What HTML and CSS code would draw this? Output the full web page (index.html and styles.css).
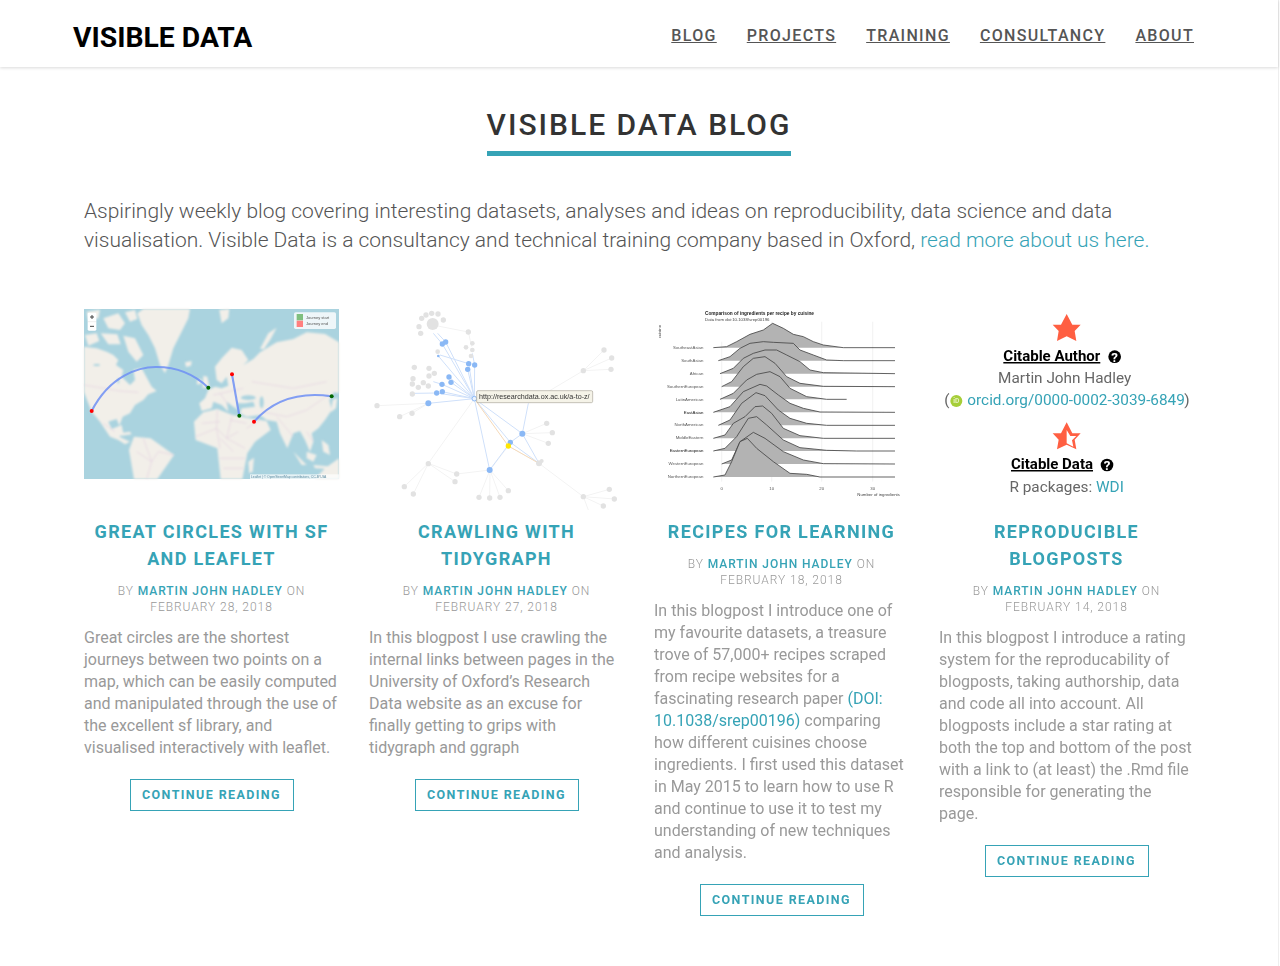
FILE: index.html
```html
<!DOCTYPE html>
<html>
<head>
    <meta charset="UTF-8">
    <meta name="viewport" content="width=device-width, initial-scale=1.0">
    <title>Visible Data Blog</title>
    <link rel="stylesheet" href="styles.css">
</head>
<body>
<div class="page">
    <header class="site-header">
        <a class="logo" href="#">VISIBLE DATA</a>
        <nav class="site-nav">
            <a href="#">Blog</a>
            <a href="#">Projects</a>
            <a href="#">Training</a>
            <a href="#">Consultancy</a>
            <a href="#">About</a>
        </nav>
    </header>

    <main class="container">
        <div class="page-title"><h1>Visible Data Blog</h1></div>
        <p class="intro">Aspiringly weekly blog covering interesting datasets, analyses and ideas on reproducibility, data science and data visualisation. Visible Data is a consultancy and technical training company based in Oxford, <a href="#">read more about us here.</a></p>

        <div class="posts">
            <article class="post">
                <div class="thumb">
                    <svg class="thumb-map" viewBox="12 12 765 510">
                        <rect x="12" y="12" width="765" height="510" fill="#aad3df"/>
                        <g class="blur-a" fill="#f2efe9">
                            <path d="M12 125L50 130 80 140 100 150 115 165 108 180 130 195 125 215 150 240 165 225 160 195 185 190 215 245 230 258 205 268 190 285 165 300 150 325 128 335 118 362 110 342 85 350 95 372 125 360 130 385 118 395 150 410 135 418 115 405 90 395 60 350 35 320 12 262Z"/>
                            <path d="M172 25L190 12 330 12 325 40 300 90 280 130 265 180 255 205 240 180 225 130 205 90 185 60Z"/>
                            <path d="M15 90L50 85 58 108 25 122ZM70 40L115 25 135 55 120 75 85 70ZM130 92L165 100 190 150 170 170 145 140ZM62 85L112 88 122 118 85 118ZM135 22L165 15 172 42 150 50ZM20 20L60 14 55 40 25 45Z"/>
                            <path d="M315 172L335 168 333 182 318 186ZM370 212L382 215 388 245 368 250ZM352 225L364 222 362 238 350 238ZM418 15L448 12 445 40 425 55ZM540 132L565 85 590 68 572 102 552 132ZM118 385L150 380 155 388 125 392Z"/>
                            <path d="M358 295L375 280 385 255 405 245 425 250 445 242 440 215 425 235 410 225 405 185 425 160 455 128 485 135 505 165 490 180 520 162 540 142 590 112 640 102 680 82 735 87 777 112 777 265 762 262 748 285 755 315 735 345 715 370 695 385 700 410 690 440 675 405 660 378 640 385 622 430 600 385 590 350 560 345 540 330 500 335 480 325 485 310 525 305 520 290 495 295 470 295 475 315 460 305 440 290 445 320 425 300 400 290 395 310 365 318Z"/>
                            <path d="M480 335L560 348 572 375 525 410 505 395Z"/>
                            <path d="M342 350L370 322 412 312 457 330 490 335 502 345 532 400 502 445 487 522 422 522 412 430 347 405Z"/>
                            <path d="M162 395L212 400 282 450 232 522 162 522 147 435Z"/>
                            <path d="M505 470L522 458 518 500 508 505ZM705 522L735 490 777 460 777 522ZM680 440L710 450 700 470 680 460ZM725 405L745 420 750 450 730 440ZM758 285L772 278 768 310 752 322ZM640 440L680 480 665 480ZM700 480L760 485 755 492 705 490Z"/>
                        </g>
                        <g class="blur-a" fill="#aad3df">
                            <ellipse cx="505" cy="278" rx="22" ry="7"/>
                            <ellipse cx="545" cy="292" rx="6" ry="18"/>
                            <ellipse cx="115" cy="228" rx="3" ry="8"/>
                            <ellipse cx="50" cy="180" rx="10" ry="3"/>
                        </g>
                        <g class="blur-a map-borders">
                            <path d="M12 240L120 258 175 262M70 355L105 380M190 400L215 470 235 440 282 450M170 440L215 470 200 522M347 395L410 370 440 400 475 380M412 315L410 370 420 430M457 330L440 400 495 430M420 460L495 460M500 370L540 345M545 320L620 335 680 315 745 270M515 230L640 250 740 230M420 265L445 300M400 270L490 250M590 335L640 395M680 380L700 410M365 355L420 350M450 345L500 355M420 400L460 440M430 490L490 490"/>
                        </g>
                        <g class="blur-b map-arcs">
                            <path d="M35 318C90 210 180 185 230 186 290 186 345 210 385 248"/>
                            <path d="M456 208L478 332"/>
                            <path d="M522 350C580 285 660 260 755 274"/>
                        </g>
                        <g class="blur-b">
                            <circle cx="35" cy="318" r="6" fill="#f00"/>
                            <circle cx="456" cy="208" r="6" fill="#f00"/>
                            <circle cx="522" cy="350" r="6" fill="#f00"/>
                            <circle cx="385" cy="248" r="6" fill="#060"/>
                            <circle cx="478" cy="332" r="6" fill="#060"/>
                            <circle cx="755" cy="274" r="6" fill="#060"/>
                            <rect x="23" y="23" width="26" height="54" rx="4" fill="#fff"/>
                            <line x1="23" y1="50" x2="49" y2="50" stroke="#ccc"/>
                            <path d="M30 36h12M36 30v12M30 64h12" stroke="#444" stroke-width="3"/>
                            <rect x="642" y="22" width="126" height="50" rx="5" fill="#fff" fill-opacity=".8"/>
                            <rect x="650" y="27" width="19" height="19" fill="#7fbf7f"/>
                            <rect x="650" y="47" width="19" height="19" fill="#ff7f7f"/>
                            <text class="map-text" x="678" y="41">Journey start</text>
                            <text class="map-text" x="678" y="61">Journey end</text>
                            <rect x="510" y="508" width="267" height="14" fill="#fff" fill-opacity=".7"/>
                            <text class="map-attr" x="513" y="519">Leaflet | © OpenStreetMap contributors, CC-BY-SA</text>
                        </g>
                    </svg>
                </div>
                <h2><a href="#">Great Circles with SF and Leaflet</a></h2>
                <p class="meta">By <a href="#">Martin John Hadley</a> on February 28, 2018</p>
                <p class="excerpt">Great circles are the shortest journeys between two points on a map, which can be easily computed and manipulated through the use of the excellent sf library, and visualised interactively with leaflet.</p>
                <a class="btn" href="#">Continue Reading</a>
            </article>

            <article class="post">
                <div class="thumb">
                    <svg class="thumb-graph" viewBox="12 27 765 600">
                        <g class="blur-b graph-faint">
                            <path d="M328 296L190 490 118 560M190 490L145 582M190 490L275 522M190 490L270 545M375 510L342 592M375 510L374 594M375 510L405 592M375 510L430 572M375 510L275 522M522 490L655 590 733 568M655 590L748 597M655 590L715 618M655 590L670 630M472 401L545 370M472 401L562 398M472 401L550 430M490 310L655 212 717 150M655 212L740 174M655 212L738 208M190 310L36 317M190 310L104 350M190 310L141 340M203 75L310 96M320 140L310 96M430 438L522 490M430 438L375 510"/>
                        </g>
                        <g class="blur-b graph-links">
                            <path d="M328 296L232 132M328 296L242 126M328 296L220 168M328 296L311 191M328 296L308 208M328 296L329 195M328 296L252 231M328 296L258 247M328 296L231 253M328 296L232 275M328 296L215 279M328 296L190 310M328 296L472 401M328 296L436 427M328 296L374 510M374 510L436 427M436 427L522 490M472 401L522 490M472 401L436 427M490 310L472 401M232 132L205 100M242 126L218 100M311 191L225 165M329 195L322 160M231 253L205 245M215 279L150 280"/>
                            <path class="graph-orange" d="M328 296L430 438 522 490"/>
                        </g>
                        <g class="blur-b" fill="#e2e2e2">
                            <circle cx="203" cy="72" r="18"/>
                            <circle cx="183" cy="45" r="8"/><circle cx="200" cy="40" r="8"/><circle cx="219" cy="42" r="8"/><circle cx="170" cy="55" r="8"/><circle cx="162" cy="80" r="8"/><circle cx="235" cy="60" r="8"/><circle cx="167" cy="100" r="8"/><circle cx="310" cy="96" r="8"/>
                            <circle cx="303" cy="142" r="7"/><circle cx="322" cy="130" r="7"/><circle cx="322" cy="150" r="7"/><circle cx="318" cy="168" r="7"/><circle cx="218" cy="155" r="7"/>
                            <circle cx="148" cy="202" r="8"/><circle cx="192" cy="205" r="8"/><circle cx="208" cy="220" r="8"/><circle cx="192" cy="228" r="8"/><circle cx="144" cy="236" r="8"/><circle cx="175" cy="248" r="8"/><circle cx="142" cy="252" r="8"/><circle cx="160" cy="262" r="8"/><circle cx="190" cy="258" r="8"/><circle cx="142" cy="282" r="8"/>
                            <circle cx="36" cy="317" r="8"/><circle cx="104" cy="350" r="8"/><circle cx="141" cy="340" r="8"/>
                            <circle cx="190" cy="491" r="8"/><circle cx="118" cy="560" r="8"/><circle cx="145" cy="582" r="8"/><circle cx="275" cy="522" r="8"/><circle cx="270" cy="545" r="8"/>
                            <circle cx="342" cy="592" r="8"/><circle cx="374" cy="594" r="8"/><circle cx="405" cy="592" r="8"/><circle cx="430" cy="572" r="8"/>
                            <circle cx="522" cy="490" r="9"/><circle cx="530" cy="483" r="6"/>
                            <circle cx="545" cy="370" r="8"/><circle cx="562" cy="398" r="8"/><circle cx="550" cy="430" r="8"/>
                            <circle cx="655" cy="212" r="8"/><circle cx="717" cy="150" r="8"/><circle cx="740" cy="174" r="8"/><circle cx="738" cy="208" r="8"/>
                            <circle cx="655" cy="590" r="8"/><circle cx="733" cy="568" r="8"/><circle cx="748" cy="597" r="8"/><circle cx="715" cy="618" r="8"/>
                        </g>
                        <g class="blur-b" fill="#8ab8f5">
                            <circle cx="232" cy="132" r="8"/><circle cx="242" cy="126" r="8"/><circle cx="220" cy="168" r="4"/>
                            <circle cx="311" cy="191" r="8"/><circle cx="308" cy="208" r="8"/><circle cx="329" cy="195" r="8"/>
                            <circle cx="252" cy="231" r="8"/><circle cx="258" cy="247" r="8"/><circle cx="231" cy="253" r="8"/><circle cx="232" cy="275" r="8"/><circle cx="215" cy="279" r="8"/><circle cx="190" cy="310" r="9"/>
                            <circle cx="472" cy="401" r="9"/><circle cx="436" cy="427" r="8"/><circle cx="374" cy="510" r="9"/>
                            <circle cx="328" cy="296" r="7" fill="#eaf3ff" stroke="#8ab8f5" stroke-width="3"/>
                            <circle cx="430" cy="438" r="8" fill="#ffe600"/>
                        </g>
                        <g class="blur-c">
                            <rect x="335" y="272" width="348" height="36" rx="4" fill="#f5f3e8" stroke="#aaa69a" stroke-width="2"/>
                            <text class="graph-tip" x="342" y="297">http://researchdata.ox.ac.uk/a-to-z/</text>
                        </g>
                    </svg>
                </div>
                <h2><a href="#">Crawling with tidygraph</a></h2>
                <p class="meta">By <a href="#">Martin John Hadley</a> on February 27, 2018</p>
                <p class="excerpt">In this blogpost I use crawling the internal links between pages in the University of Oxford’s Research Data website as an excuse for finally getting to grips with tidygraph and ggraph</p>
                <a class="btn" href="#">Continue Reading</a>
            </article>

            <article class="post">
                <div class="thumb">
                    <svg class="thumb-ridges" viewBox="12 12 765 600">
                        <g class="blur-c">
                            <path class="grid" d="M215 110V530M365 50V530M515 50V530M668 50V530"/>
                            <path class="ridge" d="M190 128L230 125 260 110 300 88 340 75 368 55 400 70 430 88 460 95 490 110 520 120 580 128 735 128"/>
                            <path class="ridge" d="M205 167L240 155 270 130 300 115 340 110 370 112 430 115 450 135 490 150 530 165 580 167 735 167"/>
                            <path class="ridge" d="M210 206L250 190 280 160 310 145 345 135 380 135 410 150 450 170 480 195 520 203 735 206"/>
                            <path class="ridge" d="M215 245L245 230 280 185 310 160 345 155 375 175 410 215 450 235 520 244 735 245"/>
                            <path class="ridge" d="M210 283L250 265 290 225 320 208 360 200 390 215 420 250 470 275 530 283 590 283"/>
                            <path class="ridge" d="M190 322L240 305 280 260 330 238 350 243 385 270 420 295 460 310 510 321 735 322"/>
                            <path class="ridge" d="M205 361L240 345 275 295 318 263 345 272 385 315 420 340 470 355 530 361 735 361"/>
                            <path class="ridge" d="M190 400L225 390 250 355 285 335 315 305 338 303 365 325 400 370 450 392 520 400 735 400"/>
                            <path class="ridge" d="M190 438L225 430 260 395 295 340 320 335 350 360 400 405 450 428 530 436 620 438 735 438"/>
                            <path class="ridge" d="M215 477L245 465 270 410 310 382 345 400 400 440 460 465 520 476 735 477"/>
                            <path class="ridge" d="M190 516L225 510 245 470 270 410 292 400 320 430 370 470 420 505 470 508 510 516 735 516"/>
                            <text class="ridge-title" x="165" y="31">Comparison of ingredients per recipe by cuisine</text>
                            <text class="ridge-sub" x="165" y="48">Data from doi:10.1038/srep00196</text>
                            <text class="ridge-sub" transform="translate(32 100) rotate(-90)">cuisine</text>
                            <g class="ridge-labels">
                                <text x="160" y="132">SoutheastAsian</text>
                                <text x="160" y="171">SouthAsian</text>
                                <text x="160" y="210">African</text>
                                <text x="160" y="248">SouthernEuropean</text>
                                <text x="160" y="287">LatinAmerican</text>
                                <text x="160" y="326" class="ridge-dark">EastAsian</text>
                                <text x="160" y="364">NorthAmerican</text>
                                <text x="160" y="403">MiddleEastern</text>
                                <text x="160" y="441" class="ridge-dark">EasternEuropean</text>
                                <text x="160" y="480">WesternEuropean</text>
                                <text x="160" y="519">NorthernEuropean</text>
                            </g>
                            <g class="ridge-ticks">
                                <text x="215" y="555">0</text>
                                <text x="365" y="555">10</text>
                                <text x="515" y="555">20</text>
                                <text x="668" y="555">30</text>
                            </g>
                            <text class="ridge-sub" x="622" y="574">Number of ingredients</text>
                        </g>
                    </svg>
                </div>
                <h2><a href="#">Recipes for Learning</a></h2>
                <p class="meta">By <a href="#">Martin John Hadley</a> on February 18, 2018</p>
                <p class="excerpt">In this blogpost I introduce one of my favourite datasets, a treasure trove of 57,000+ recipes scraped from recipe websites for a fascinating research paper <a href="#">(DOI: 10.1038/srep00196)</a> comparing how different cuisines choose ingredients. I first used this dataset in May 2015 to learn how to use R and continue to use it to test my understanding of new techniques and analysis.</p>
                <a class="btn" href="#">Continue Reading</a>
            </article>

            <article class="post">
                <div class="thumb">
                    <svg class="thumb-rating" viewBox="12 12 765 600">
                        <g class="blur-c">
                            <path class="star" d="M395 27L412 59 437 59 419 78 424 108 395 94 366 108 371 78 353 59 378 59Z"/>
                            <text class="rate-head" x="205" y="168">Citable Author</text>
                            <circle cx="539" cy="155" r="19"/>
                            <text class="rate-q" x="539" y="170">?</text>
                            <text class="rate-line rate-mid" x="389" y="235">Martin John Hadley</text>
                            <text class="rate-line" x="28" y="300">(</text>
                            <circle cx="64" cy="288" r="18" fill="#a6ce39"/>
                            <text class="rate-id" x="64" y="295">iD</text>
                            <text class="rate-line rate-link" x="97" y="300">orcid.org/0000-0002-3039-6849</text>
                            <text class="rate-line" x="748" y="300">)</text>
                            <path class="star" d="M395 352L412 385 437 385 419 404 424 433 395 419 366 433 371 404 353 385 378 385Z"/>
                            <path class="star-half" d="M395 375L406 393 424 393 411 406 415 425 395 415Z"/>
                            <text class="rate-head" x="228" y="492">Citable Data</text>
                            <circle cx="516" cy="480" r="19"/>
                            <text class="rate-q" x="516" y="495">?</text>
                            <text class="rate-line rate-mid" x="395" y="560">R packages: <tspan class="rate-link">WDI</tspan></text>
                        </g>
                    </svg>
                </div>
                <h2><a href="#">Reproducible Blogposts</a></h2>
                <p class="meta">By <a href="#">Martin John Hadley</a> on February 14, 2018</p>
                <p class="excerpt">In this blogpost I introduce a rating system for the reproducability of blogposts, taking authorship, data and code all into account. All blogposts include a star rating at both the top and bottom of the post with a link to (at least) the .Rmd file responsible for generating the page.</p>
                <a class="btn" href="#">Continue Reading</a>
            </article>
        </div>
    </main>
</div>

<svg class="defs" width="0" height="0">
    <filter id="soft-a"><feGaussianBlur stdDeviation="2.4"/></filter>
    <filter id="soft-b"><feGaussianBlur stdDeviation="1.8"/></filter>
    <filter id="soft-c"><feGaussianBlur stdDeviation="1"/></filter>
</svg>
</body>
</html>
```

FILE: styles.css
```css
body {
    font-family: 'Roboto', 'Liberation Sans', sans-serif;
    background-color: #ffffff;
    color: #999999;
    margin: 0;
}
a {
    color: #36a3b6;
    text-decoration: none;
}
.page {
    width: 1278px;
    min-height: 966px;
    border-right: 1px solid #eeeeee;
}
.site-header {
    display: flex;
    justify-content: space-between;
    align-items: center;
    height: 67px;
    padding: 0 84px 0 73px;
    box-shadow: 0 1px 3px rgba(0, 0, 0, 0.15);
}
.logo {
    color: #000000;
    font-size: 28.3px;
    font-weight: 700;
    margin-top: 8px;
}
.site-nav {
    display: flex;
    gap: 30px;
    margin-top: 4px;
}
.site-nav a {
    color: #555555;
    font-size: 16px;
    font-weight: 500;
    letter-spacing: 1.33px;
    text-transform: uppercase;
    text-decoration: underline;
}
.container {
    padding: 0 84px;
}
.page-title {
    display: flex;
    justify-content: center;
    padding-top: 39px;
}
h1 {
    margin: 0;
    color: #333333;
    font-size: 30px;
    font-weight: 500;
    line-height: 38px;
    letter-spacing: 2px;
    text-transform: uppercase;
    padding-bottom: 7px;
    border-bottom: 5px solid #36a3b6;
}
.intro {
    margin: 41px 0 0;
    color: #555555;
    font-size: 20.97px;
    font-weight: 300;
    line-height: 29px;
}
.posts {
    display: grid;
    grid-template-columns: repeat(4, 255px);
    gap: 30px;
    align-items: start;
    margin-top: 54px;
}
.post {
    text-align: center;
}
.thumb {
    height: 200px;
    text-align: left;
}
.thumb svg {
    display: block;
    width: 255px;
    overflow: visible;
}
.thumb-map { height: 170px; }
.thumb-graph, .thumb-ridges, .thumb-rating { height: 200px; }
.post h2 {
    margin: 9px 0 0;
    font-size: 18px;
    font-weight: 700;
    line-height: 27px;
    letter-spacing: 1.33px;
    text-transform: uppercase;
}
.meta {
    margin: 11px 0 0;
    font-size: 12px;
    font-weight: 300;
    line-height: 16px;
    letter-spacing: 0.95px;
    text-transform: uppercase;
}
.meta a {
    font-weight: 500;
}
.excerpt {
    margin: 12px 0 0;
    font-size: 16px;
    line-height: 22px;
    text-align: left;
}
.btn {
    display: inline-block;
    margin-top: 20px;
    padding: 0 11.5px;
    border: 1px solid #36a3b6;
    font-size: 12.5px;
    font-weight: 700;
    line-height: 30px;
    letter-spacing: 1.4px;
    text-transform: uppercase;
}
.defs {
    position: absolute;
}

/* pictures */
.blur-a { filter: url(#soft-a); }
.blur-b { filter: url(#soft-b); }
.blur-c { filter: url(#soft-c); }
.map-borders { fill: none; stroke: #e3cfe0; stroke-width: 2; }
.map-arcs { fill: none; stroke: #6f8ff5; stroke-width: 6.5; stroke-opacity: 0.85; }
.map-text { font: 12px 'Liberation Sans', sans-serif; fill: #555; }
.map-attr { font: 10px 'Liberation Sans', sans-serif; fill: #5a8aa0; }
.graph-faint { fill: none; stroke: #f3f3f3; stroke-width: 3; }
.graph-links { fill: none; stroke: #cfe0fa; stroke-width: 3; }
.graph-orange { stroke: #f5d9b8; }
.graph-tip { font: 21.5px 'Liberation Sans', sans-serif; fill: #333; }
.grid { fill: none; stroke: #ececec; stroke-width: 2; }
.ridge { fill: #b3b3b3; stroke: #444; stroke-width: 2.5; stroke-linejoin: round; }
.ridge-title { font: bold 14.3px 'Liberation Sans', sans-serif; fill: #222; }
.ridge-sub { font: 13px 'Liberation Sans', sans-serif; fill: #444; }
.ridge-labels text { font: 13px 'Liberation Sans', sans-serif; fill: #555; text-anchor: end; }
.ridge-labels .ridge-dark { fill: #111; }
.ridge-ticks text { font: 13px 'Liberation Sans', sans-serif; fill: #555; text-anchor: middle; }
.star { fill: #ff5f42; }
.star-half { fill: #ffffff; }
.rate-head { font: 700 45px 'Roboto', sans-serif; fill: #000; text-decoration: underline; }
.rate-q { font: 700 40px 'Roboto', sans-serif; fill: #fff; text-anchor: middle; }
.rate-line { font: 400 46px 'Roboto', sans-serif; fill: #666; }
.rate-mid { text-anchor: middle; }
.rate-link { fill: #36a3b6; }
.rate-id { font: 700 20px 'Roboto', sans-serif; fill: #e6f2c0; text-anchor: middle; }
```
